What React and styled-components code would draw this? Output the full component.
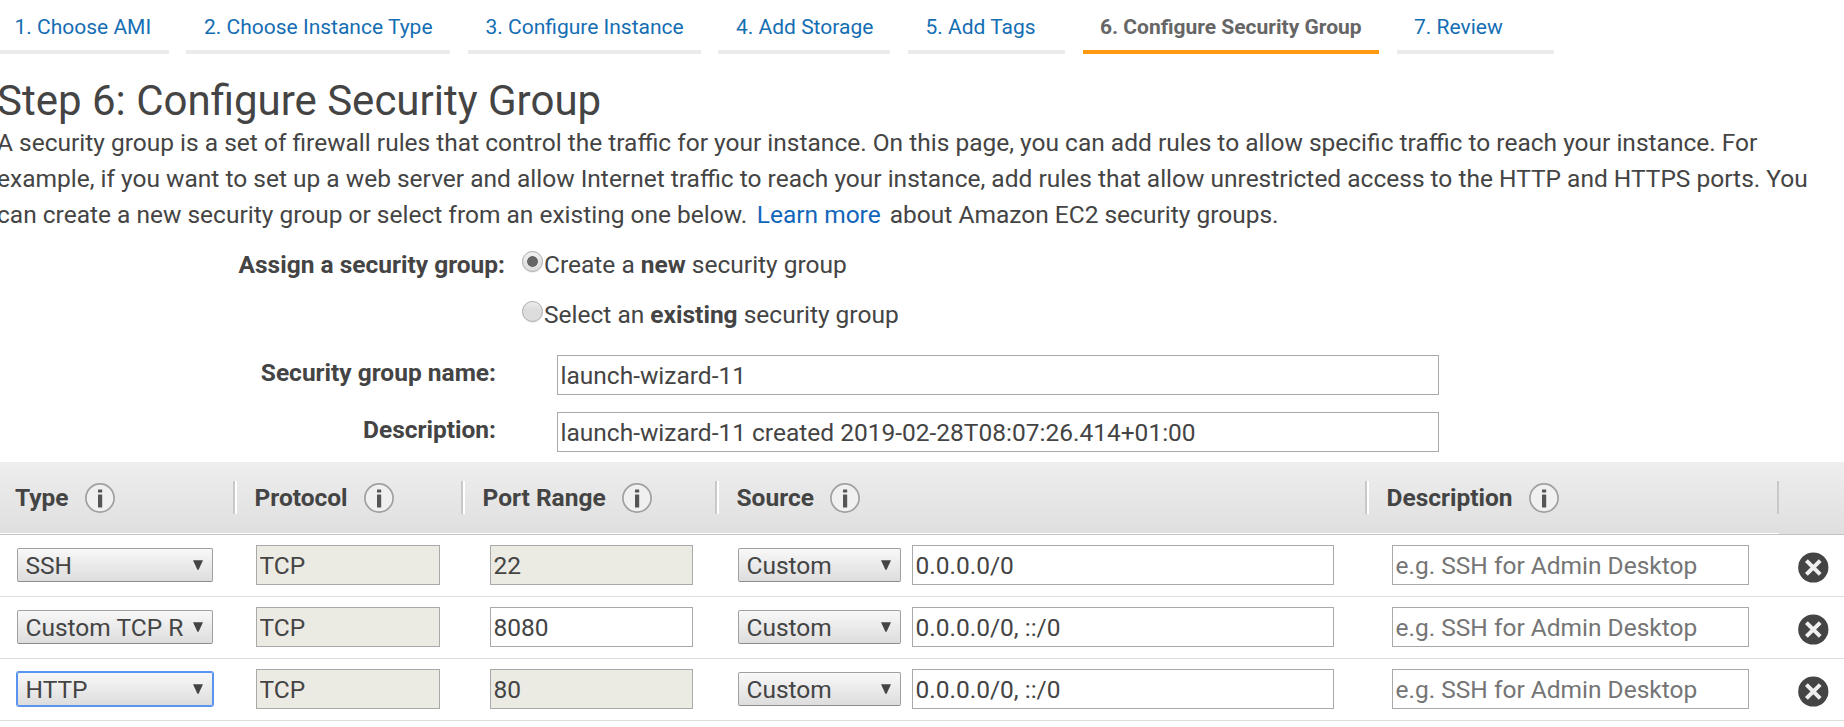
import React from "react";
import styled, { createGlobalStyle, css } from "styled-components";

const GlobalStyle = createGlobalStyle`
  * { box-sizing: border-box; }
  body {
    margin: 0;
    background: #fff;
    color: #444;
    font-family: Roboto, "Liberation Sans", sans-serif;
    font-size: 24.5px;
    overflow: hidden;
  }
  input, button { font-family: inherit; font-size: inherit; color: inherit; }
`;

const Page = styled.main`
  width: 1844px;
  height: 727px;
  overflow: hidden;
`;

const Steps = styled.nav`
  display: flex;
  height: 54px;
`;

const Step = styled.a`
  flex: none;
  width: ${(p) => p.$width}px;
  margin-right: ${(p) => p.$gap ?? 18}px;
  padding: 4px 0 0 ${(p) => p.$inset ?? 17.5}px;
  border-bottom: 4px solid ${(p) => (p.$active ? "#ff9912" : "#ebebeb")};
  color: ${(p) => (p.$active ? "#666" : "#146eb4")};
  font-size: 21px;
  font-weight: ${(p) => (p.$active ? 700 : 400)};
  line-height: 46px;
  white-space: nowrap;
`;

const Intro = styled.header`
  margin: 23px 0 0 -3px;
`;

const Title = styled.h1`
  margin: 0;
  font-size: 42px;
  font-weight: 400;
  line-height: 48px;
`;

const Lead = styled.p`
  margin: 0;
  line-height: 36px;
  white-space: nowrap;
`;

const Link = styled.a`
  margin: 0 3px 0 3.5px;
  color: #1166bb;
`;

const AssignSection = styled.section`
  display: grid;
  grid-template-columns: 505px 1fr;
  column-gap: 17px;
  margin-top: 17px;
  line-height: 30px;
`;

const Label = styled.div`
  font-weight: 700;
  text-align: right;
`;

const Options = styled.div`
  display: flex;
  flex-direction: column;
  gap: 20px;
`;

const Option = styled.label`
  display: flex;
  align-items: flex-start;
  height: 30px;
  white-space: pre;
`;

const Radio = styled.input`
  appearance: none;
  flex: none;
  width: 21px;
  height: 21px;
  margin: 1px 1px 0 0;
  border: 1px solid #a9a9a9;
  border-radius: 50%;
  background: linear-gradient(#eee, #ddd 40%, #ddd);
  box-shadow: 0 1px 1px rgba(0, 0, 0, 0.08);
  &:checked {
    background: radial-gradient(circle, #666 5px, transparent 5.7px), linear-gradient(#f0f0f0, #ddd);
  }
`;

const Fields = styled.section`
  display: flex;
  flex-direction: column;
  gap: 17px;
  margin-top: 25px;
`;

const Field = styled.div`
  display: grid;
  grid-template-columns: 496px 882px;
  column-gap: 61px;
  line-height: 30px;
  ${Label} { padding-top: 3px; }
`;

const TextInput = styled.input`
  display: block;
  width: ${(p) => (p.$width ? `${p.$width}px` : "100%")};
  height: 40px;
  margin: 0;
  padding: 1px 2.5px 0;
  border: 1px solid #a9a9a9;
  border-radius: 0;
  outline: none;
  background: ${(p) => (p.readOnly && p.$locked ? "#ebebe4" : "#fff")};
  &::placeholder { color: #757575; opacity: 1; }
`;

const columns = css`
  display: grid;
  grid-template-columns: 235px 228px 254px 650px 412px 65px;
`;

const Table = styled.section`
  margin-top: 10px;
`;

const HeadRow = styled.div`
  ${columns}
  height: 73px;
  border-bottom: 1px solid #c3c3c3;
  background: linear-gradient(#eeeeee, #dfdfdf);
`;

const HeadCell = styled.div`
  display: flex;
  align-items: center;
  height: 72px;
  padding-left: ${(p) => (p.$first ? 15 : 0)}px;
  border-bottom: ${(p) => (p.$last ? "none" : "1px solid #fff")};
  font-weight: 700;
  line-height: 30px;
  &::before {
    content: "";
    display: ${(p) => (p.$first || p.$last ? "none" : "block")};
    width: 2px;
    height: 33px;
    margin-right: 17.5px;
    background: #fff;
  }
  &::after {
    content: "";
    display: ${(p) => (p.$last ? "none" : "block")};
    width: 2px;
    height: 33px;
    margin-left: auto;
    background: #c9c9c9;
  }
`;

const InfoSvg = styled.svg`
  flex: none;
  width: 30px;
  height: 30px;
  margin-left: 16px;
`;

const Row = styled.div`
  ${columns}
  height: 62px;
  border-bottom: 1px solid #ddd;
`;

const Cell = styled.div`
  display: flex;
  align-items: center;
  height: 60px;
  padding-left: ${(p) => p.$inset}px;
`;

const SelectButton = styled.button`
  display: flex;
  flex: none;
  align-items: center;
  justify-content: space-between;
  width: ${(p) => p.$width}px;
  height: 34px;
  padding: 1px 9px 0 7.5px;
  border: 1px solid #a0a0a0;
  border-bottom-color: #8c8c8c;
  border-radius: 2px;
  outline: none;
  background: linear-gradient(#f8f8f8, #dddddd);
  line-height: 30px;
  white-space: nowrap;
  ${(p) =>
    p.$focused &&
    css`
      border-color: #5b94f0;
      box-shadow: 0 0 0 1px #5b94f0;
    `}
`;

const Arrow = styled.svg`
  flex: none;
  width: 10px;
  height: 10px;
  margin-top: -1px;
`;

const SourceInputSlot = styled.div`
  margin-left: 11px;
`;

const RemoveButton = styled.button`
  display: block;
  width: 31px;
  height: 31px;
  margin-top: 4px;
  padding: 0;
  border: 0;
  background: none;
`;

const Info = () => (
  <InfoSvg viewBox="0 0 30 30">
    <circle cx="15" cy="15" r="14.1" fill="#f0f0f0" stroke="#a0a0a0" strokeWidth="1.7" />
    <rect x="13" y="6.4" width="4.2" height="3" rx="0.5" fill="#555" />
    <rect x="13" y="11.4" width="4.2" height="13.2" rx="0.5" fill="#555" />
  </InfoSvg>
);

const Select = ({ width, value, focused }) => (
  <SelectButton type="button" $width={width} $focused={focused}>
    <span>{value}</span>
    <Arrow viewBox="0 0 10 10">
      <path d="M0 0.2H10L5.6 9.8H4.4Z" fill="#444" />
    </Arrow>
  </SelectButton>
);

const Remove = () => (
  <RemoveButton type="button" aria-label="Remove">
    <svg width="31" height="31" viewBox="0 0 31 31">
      <circle cx="15.3" cy="15.5" r="15.1" fill="#444" />
      <path d="M8.4 8.6L22.2 22.4M22.2 8.6L8.4 22.4" stroke="#efefef" strokeWidth="4" />
    </svg>
  </RemoveButton>
);

const steps = [
  { text: "1. Choose AMI", width: 169, gap: 17, inset: 14.5 },
  { text: "2. Choose Instance Type", width: 264, inset: 18 },
  { text: "3. Configure Instance", width: 233, gap: 17 },
  { text: "4. Add Storage", width: 172, inset: 18 },
  { text: "5. Add Tags", width: 157 },
  { text: "6. Configure Security Group", width: 296, active: true, inset: 17 },
  { text: "7. Review", width: 157, inset: 17 },
];

const headings = ["Type", "Protocol", "Port Range", "Source", "Description"];

const rules = [
  { type: "SSH", port: "22", locked: true, source: "0.0.0.0/0" },
  { type: "Custom TCP R", port: "8080", locked: false, source: "0.0.0.0/0, ::/0" },
  { type: "HTTP", port: "80", locked: true, source: "0.0.0.0/0, ::/0", focused: true },
];

export default function App() {
  return (
    <Page>
      <GlobalStyle />
      <Steps>
        {steps.map((s) => (
          <Step key={s.text} $width={s.width} $gap={s.gap} $inset={s.inset} $active={s.active}>
            {s.text}
          </Step>
        ))}
      </Steps>

      <Intro>
        <Title>Step 6: Configure Security Group</Title>
        <Lead>
          A security group is a set of firewall rules that control the traffic for your instance. On this page, you can add rules to allow specific traffic to reach your instance. For
          <br />
          example, if you want to set up a web server and allow Internet traffic to reach your instance, add rules that allow unrestricted access to the HTTP and HTTPS ports. You
          <br />
          can create a new security group or select from an existing one below. <Link>Learn more</Link> about Amazon EC2 security groups.
        </Lead>
      </Intro>

      <AssignSection>
        <Label>Assign a security group:</Label>
        <Options>
          <Option>
            <Radio type="radio" name="group" defaultChecked />
            <span>Create a <b>new</b> security group</span>
          </Option>
          <Option>
            <Radio type="radio" name="group" />
            <span>Select an <b>existing</b> security group</span>
          </Option>
        </Options>
      </AssignSection>

      <Fields>
        <Field>
          <Label>Security group name:</Label>
          <TextInput defaultValue="launch-wizard-11" />
        </Field>
        <Field>
          <Label>Description:</Label>
          <TextInput defaultValue="launch-wizard-11 created 2019-02-28T08:07:26.414+01:00" />
        </Field>
      </Fields>

      <Table>
        <HeadRow>
          {headings.map((h, i) => (
            <HeadCell key={h} $first={i === 0}>
              <span>{h}</span>
              <Info />
            </HeadCell>
          ))}
          <HeadCell $last />
        </HeadRow>
        {rules.map((r) => (
          <Row key={r.type}>
            <Cell $inset={17}>
              <Select width={196} value={r.type} focused={r.focused} />
            </Cell>
            <Cell $inset={21}>
              <TextInput $width={184} defaultValue="TCP" readOnly $locked />
            </Cell>
            <Cell $inset={27}>
              <TextInput $width={203} defaultValue={r.port} readOnly={r.locked} $locked={r.locked} />
            </Cell>
            <Cell $inset={21}>
              <Select width={163} value="Custom" />
              <SourceInputSlot>
                <TextInput $width={422} defaultValue={r.source} />
              </SourceInputSlot>
            </Cell>
            <Cell $inset={25}>
              <TextInput $width={357} placeholder="e.g. SSH for Admin Desktop" />
            </Cell>
            <Cell $inset={19}>
              <Remove />
            </Cell>
          </Row>
        ))}
      </Table>
    </Page>
  );
}
